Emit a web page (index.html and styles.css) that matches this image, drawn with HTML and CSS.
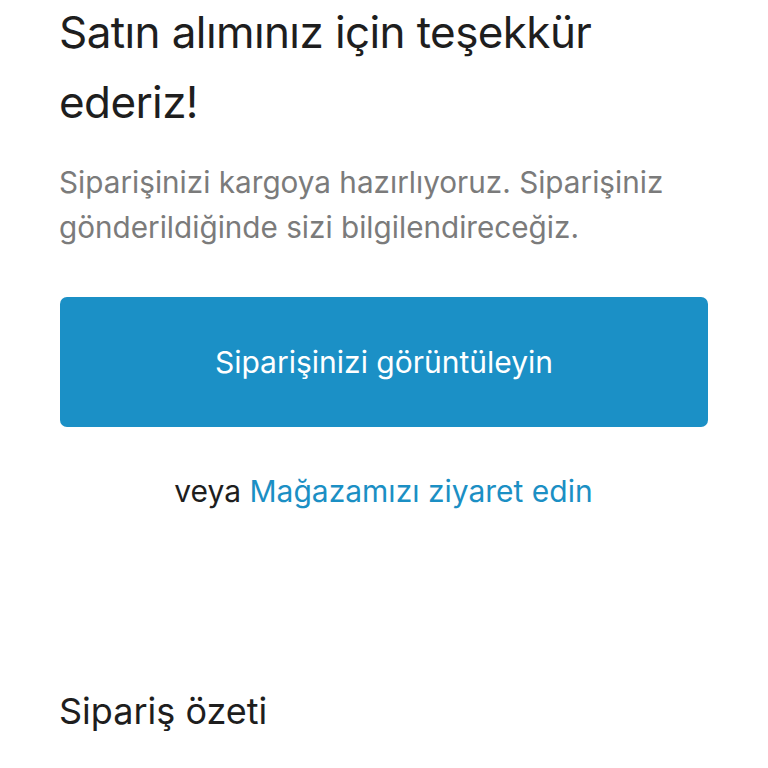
FILE: index.html
```html
<!DOCTYPE html>
<html lang="tr">
<head>
<meta charset="utf-8">
<title>Teşekkürler</title>
<link rel="stylesheet" href="styles.css">
</head>
<body>
<main class="page">
  <section class="thanks">
    <h1 class="thanks-title">Satın alımınız için teşekkür ederiz!</h1>
    <p class="thanks-text">Siparişinizi kargoya hazırlıyoruz. Siparişiniz gönderildiğinde sizi bilgilendireceğiz.</p>
    <a class="primary-btn" href="#">Siparişinizi görüntüleyin</a>
    <p class="alt-line">veya <a class="alt-link" href="#">Mağazamızı ziyaret edin</a></p>
  </section>
  <section class="summary">
    <h2 class="summary-title">Sipariş özeti</h2>
  </section>
</main>
</body>
</html>
```

FILE: styles.css
```css
html, body {
  margin: 0;
  padding: 0;
  background: #ffffff;
}
body {
  font-family: Inter, "Noto Sans", "Liberation Sans", sans-serif;
  color: #1c1c1e;
}
.page {
  width: 768px;
  height: 768px;
  overflow: hidden;
  box-sizing: border-box;
  padding: 0 60px 0 59px;
}
.thanks {
  display: flex;
  flex-direction: column;
}
.thanks-title {
  margin: -3px 0 0;
  font-size: 44px;
  font-weight: 400;
  line-height: 70px;
  letter-spacing: -0.6px;
  color: #1e1e1e;
  width: 560px;
}
.thanks-text {
  margin: 23px 0 0;
  font-size: 29.7px;
  line-height: 45px;
  color: #7b7b7b;
}
.primary-btn {
  margin-top: 47px;
  margin-left: 1px;
  height: 130px;
  display: flex;
  align-items: center;
  justify-content: center;
  background: #1b90c6;
  border-radius: 7px;
  color: #ffffff;
  font-size: 30px;
  text-decoration: none;
}
.alt-line {
  margin: 44px 0 0;
  text-align: center;
  font-size: 30px;
  line-height: 40px;
  color: #1e1e1e;
}
.alt-link {
  color: #1b8fc4;
  text-decoration: none;
}
.summary {
  margin-top: 175px;
}
.summary-title {
  margin: 0;
  font-size: 36px;
  font-weight: 400;
  line-height: 50px;
  color: #1e1e1e;
}
```
